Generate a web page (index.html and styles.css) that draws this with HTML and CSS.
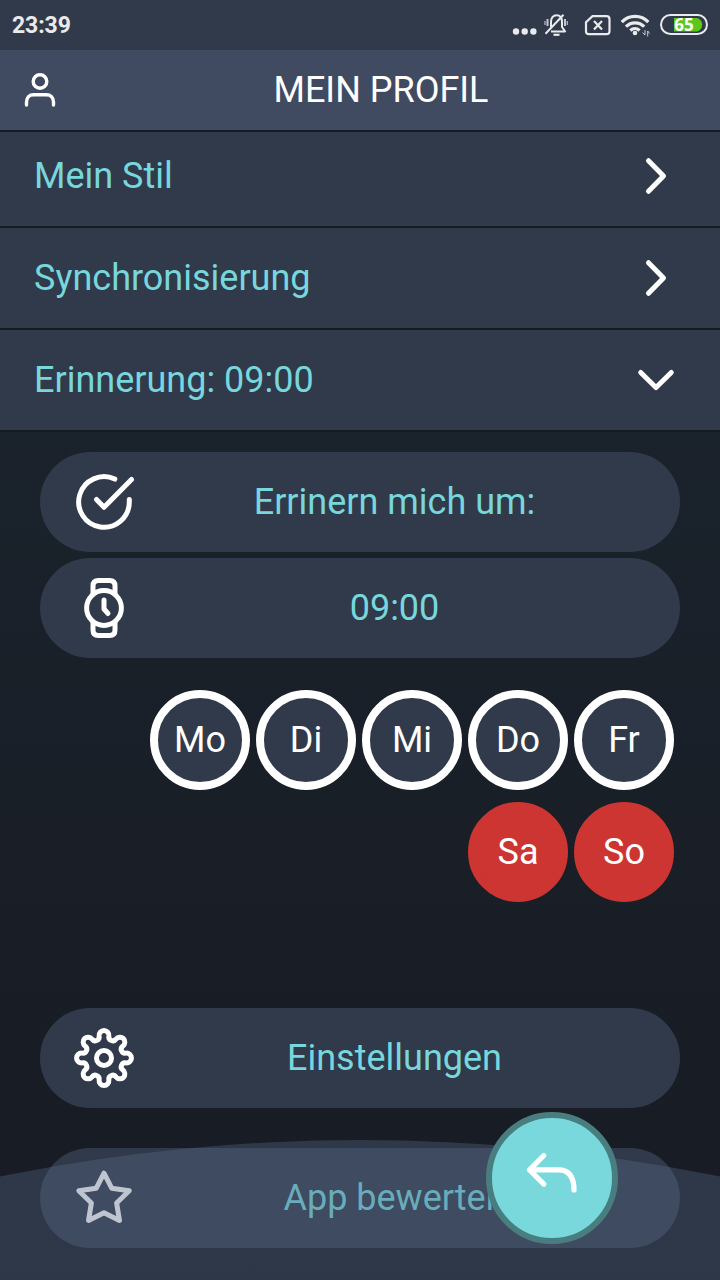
FILE: index.html
```html
<!DOCTYPE html>
<html lang="de">
<head>
<meta charset="utf-8">
<title>Mein Profil</title>
<link rel="stylesheet" href="styles.css">
</head>
<body>
<div class="screen">
  <div class="statusbar">
    <span class="clock">23:39</span>
    <svg class="status-icons" width="210" height="50" viewBox="510 0 210 50" fill="none" stroke="#e9eaec" stroke-width="2">
      <g fill="#e9eaec" stroke="none"><circle cx="516" cy="31.5" r="3.2"/><circle cx="524.7" cy="31.5" r="3.2"/><circle cx="533.4" cy="31.5" r="3.2"/></g>
      <path d="M551 31.500h14.500M551 27v-5c0-4 2-6.800 5.500-6.800s5.500 2.800 5.500 6.800v5l3.500 5M545.500 33.700l18-19"/>
      <path d="M553.500 34.800h6" stroke-width="2.200"/>
      <path d="M547.500 19v7M565 19v7" stroke-width="2" opacity=".8"/><path d="M545 21v4M567.300 21v4" stroke-width="1.400" opacity=".65"/>
      <path d="M592.500 16.200h14a3 3 0 0 1 3 3v12a3 3 0 0 1-3 3h-17.500a3 3 0 0 1-3-3v-9zM594 21l8 8.500M602 21l-8 8.500" stroke-width="2.200"/>
      <path d="M621.800 22.200c7-7.700 19.500-7.700 26.500 0M626 26.700c5-5.200 13.200-5.200 18.200 0M630.300 30.500c2.800-2.500 6.500-2.500 9.300 0" stroke-width="3.200"/>
      <circle cx="635" cy="33" r="2.300" fill="#e9eaec" stroke="none"/>
      <path d="M645 30v5l-2.500-2.500M647.700 36.500V31l1.800 2.500" stroke-width="1" opacity=".8"/>
      <path d="M674 18h23a7 7 0 0 1 0 13.500h-23z" fill="#5ac71a" stroke="none"/>
      <rect x="661" y="15" width="46" height="19" rx="9.500" stroke-width="2"/>
      <text class="battery" x="684" y="30.800" text-anchor="middle">65</text>
    </svg>
  </div>
  <header class="header">
    <svg class="user" width="40" height="40" viewBox="0 0 40 40" fill="none" stroke="#fff" stroke-width="3.400" stroke-linecap="round"><circle cx="20" cy="11.500" r="6.800"/><path d="M6.500 35v-3c0-4.500 3-7.300 7-7.300h13c4 0 7 2.800 7 7.300v3"/></svg>
    <h1 class="title">MEIN PROFIL</h1>
  </header>
  <nav class="menu">
    <div class="row row-clipped"><span>Mein Stil</span><svg class="chevron" viewBox="0 0 40 40"><path d="M12.500 4.700L27.500 20l-15 15.300"/></svg></div>
    <div class="row"><span>Synchronisierung</span><svg class="chevron" viewBox="0 0 40 40"><path d="M12.500 4.700L27.500 20l-15 15.300"/></svg></div>
    <div class="row"><span>Erinnerung: 09:00</span><svg class="chevron" viewBox="0 0 40 40"><path d="M4.700 12.500L20 27.500l15.300-15"/></svg></div>
  </nav>
  <main class="content">
    <div class="pill">
      <svg class="icon" viewBox="-32 -32 64 64"><path d="M10.800 -22.900A25.300 25.300 0 1 0 25.300 0V-2.500M-7.500 -2.500L0 5.300L27.500 -22.500"/></svg>
      <span class="label">Errinern mich um:</span>
    </div>
    <div class="pill">
      <svg class="icon" viewBox="-32 -32 64 64"><circle r="17.400"/><path d="M0 -8V1L4 5.500M-11 -14V-22Q-11 -27.500 -5.500 -27.500H5.500Q11 -27.500 11 -22V-14M-11 14V22Q-11 27.500 -5.500 27.500H5.500Q11 27.500 11 22V14"/></svg>
      <span class="label">09:00</span>
    </div>
    <div class="days">
      <span class="day">Mo</span><span class="day">Di</span><span class="day">Mi</span><span class="day">Do</span><span class="day">Fr</span><span class="day day-off">Sa</span><span class="day day-off">So</span>
    </div>
    <div class="pill settings">
      <svg class="icon" viewBox="-32 -32 64 64"><circle r="7.500"/><path d="M-4.860 -21.930A4.900 4.900 0 1 1 4.860 -21.930A4 4 0 0 0 12.070 -18.940A4.900 4.900 0 1 1 18.940 -12.070A4 4 0 0 0 21.930 -4.860A4.900 4.900 0 1 1 21.930 4.860A4 4 0 0 0 18.940 12.070A4.900 4.900 0 1 1 12.070 18.940A4 4 0 0 0 4.860 21.930A4.900 4.900 0 1 1 -4.860 21.930A4 4 0 0 0 -12.070 18.940A4.900 4.900 0 1 1 -18.940 12.070A4 4 0 0 0 -21.930 4.860A4.900 4.900 0 1 1 -21.930 -4.860A4 4 0 0 0 -18.940 -12.070A4.900 4.900 0 1 1 -12.070 -18.940A4 4 0 0 0 -4.860 -21.930Z"/></svg>
      <span class="label">Einstellungen</span>
    </div>
    <div class="pill rate">
      <svg class="icon" viewBox="-32 -32 64 64"><path d="M0 -24.800L7.700 -9.800L25.200 -7.200L12.600 5L15.500 22.500L0 14.700L-15.500 22.500L-12.600 5L-25.200 -7.200L-7.700 -9.800Z"/></svg>
      <span class="label">App bewerten</span>
    </div>
  </main>
  <div class="arc"></div>
  <button class="back" aria-label="Zurück">
    <svg width="60" height="60" viewBox="522 1148 60 60" fill="none" stroke="#fff" stroke-width="5.200" stroke-linecap="round" stroke-linejoin="round"><path d="M543.800 1155.500L529.500 1169.800L543.800 1184.100M529.500 1169.800H558.500C569 1169.800 574 1177 574 1190"/></svg>
  </button>
</div>
</body>
</html>
```

FILE: styles.css
```css
* { box-sizing: border-box; }
body { margin: 0; font-family: Roboto, sans-serif; }
.screen {
  position: relative;
  width: 720px;
  height: 1280px;
  overflow: hidden;
  background: linear-gradient(#1a222b 430px, #181b23 1280px);
  font-size: 36px;
  line-height: 42px;
  color: #77d7dc;
}
.statusbar {
  display: flex;
  justify-content: space-between;
  align-items: center;
  height: 50px;
  padding-left: 12px;
  background: #313a4a;
}
.clock { padding-top: 2px; font-size: 23px; font-weight: 700; line-height: 30px; letter-spacing: -.1px; color: #e9eaec; }
.status-icons { display: block; }
.battery { font: 700 17px "Open Sans", sans-serif; fill: #fff; stroke: none; }
.header {
  display: flex;
  align-items: center;
  height: 82px;
  padding: 0 20px;
  border-bottom: 2px solid #161b22;
  background: #404b62;
}
.user { flex: none; }
.title { flex: 1; margin: 0 0 0 2px; font-size: 36px; font-weight: 400; text-align: center; color: #fff; }
.row {
  display: flex;
  justify-content: space-between;
  align-items: center;
  height: 102px;
  padding: 0 44px 0 34px;
  border-bottom: 2px solid #161b22;
  background: #313a4a;
}
.row-clipped { height: 96px; padding-bottom: 6px; }
.chevron { width: 40px; height: 40px; fill: none; stroke: #fff; stroke-width: 5; stroke-linecap: round; stroke-linejoin: round; }
.content { display: flex; flex-direction: column; gap: 6px; padding: 20px 40px 0; }
.pill { display: flex; align-items: center; height: 100px; padding: 0 38px 0 32px; border-radius: 50px; background: #313a4a; }
.icon { flex: none; width: 64px; height: 64px; fill: none; stroke: #fff; stroke-width: 5; stroke-linecap: round; stroke-linejoin: round; }
.label { flex: 1; padding-left: 11px; text-align: center; }
.days { display: flex; flex-wrap: wrap; justify-content: flex-end; gap: 12px 6px; margin-top: 26px; padding: 0 6px 0 50px; }
.day {
  display: flex;
  align-items: center;
  justify-content: center;
  width: 100px;
  height: 100px;
  border: 8px solid #fff;
  border-radius: 50%;
  background: #313a4a;
  color: #fff;
}
.day-off { border-color: #cc3531; background: #cc3531; }
.day:nth-child(6) { margin-left: 100px; }
.settings { margin-top: 100px; }
.rate { margin-top: 34px; }
.arc {
  position: absolute;
  top: 1140px;
  left: -1434px;
  width: 3588px;
  height: 3588px;
  border-radius: 50%;
  background: rgba(85, 102, 134, .38);
}
.back {
  position: absolute;
  top: 1112px;
  left: 486px;
  display: flex;
  align-items: center;
  justify-content: center;
  width: 132px;
  height: 132px;
  padding: 0;
  border: 6px solid #487e80;
  border-radius: 50%;
  background: #79d8dc;
}
```
